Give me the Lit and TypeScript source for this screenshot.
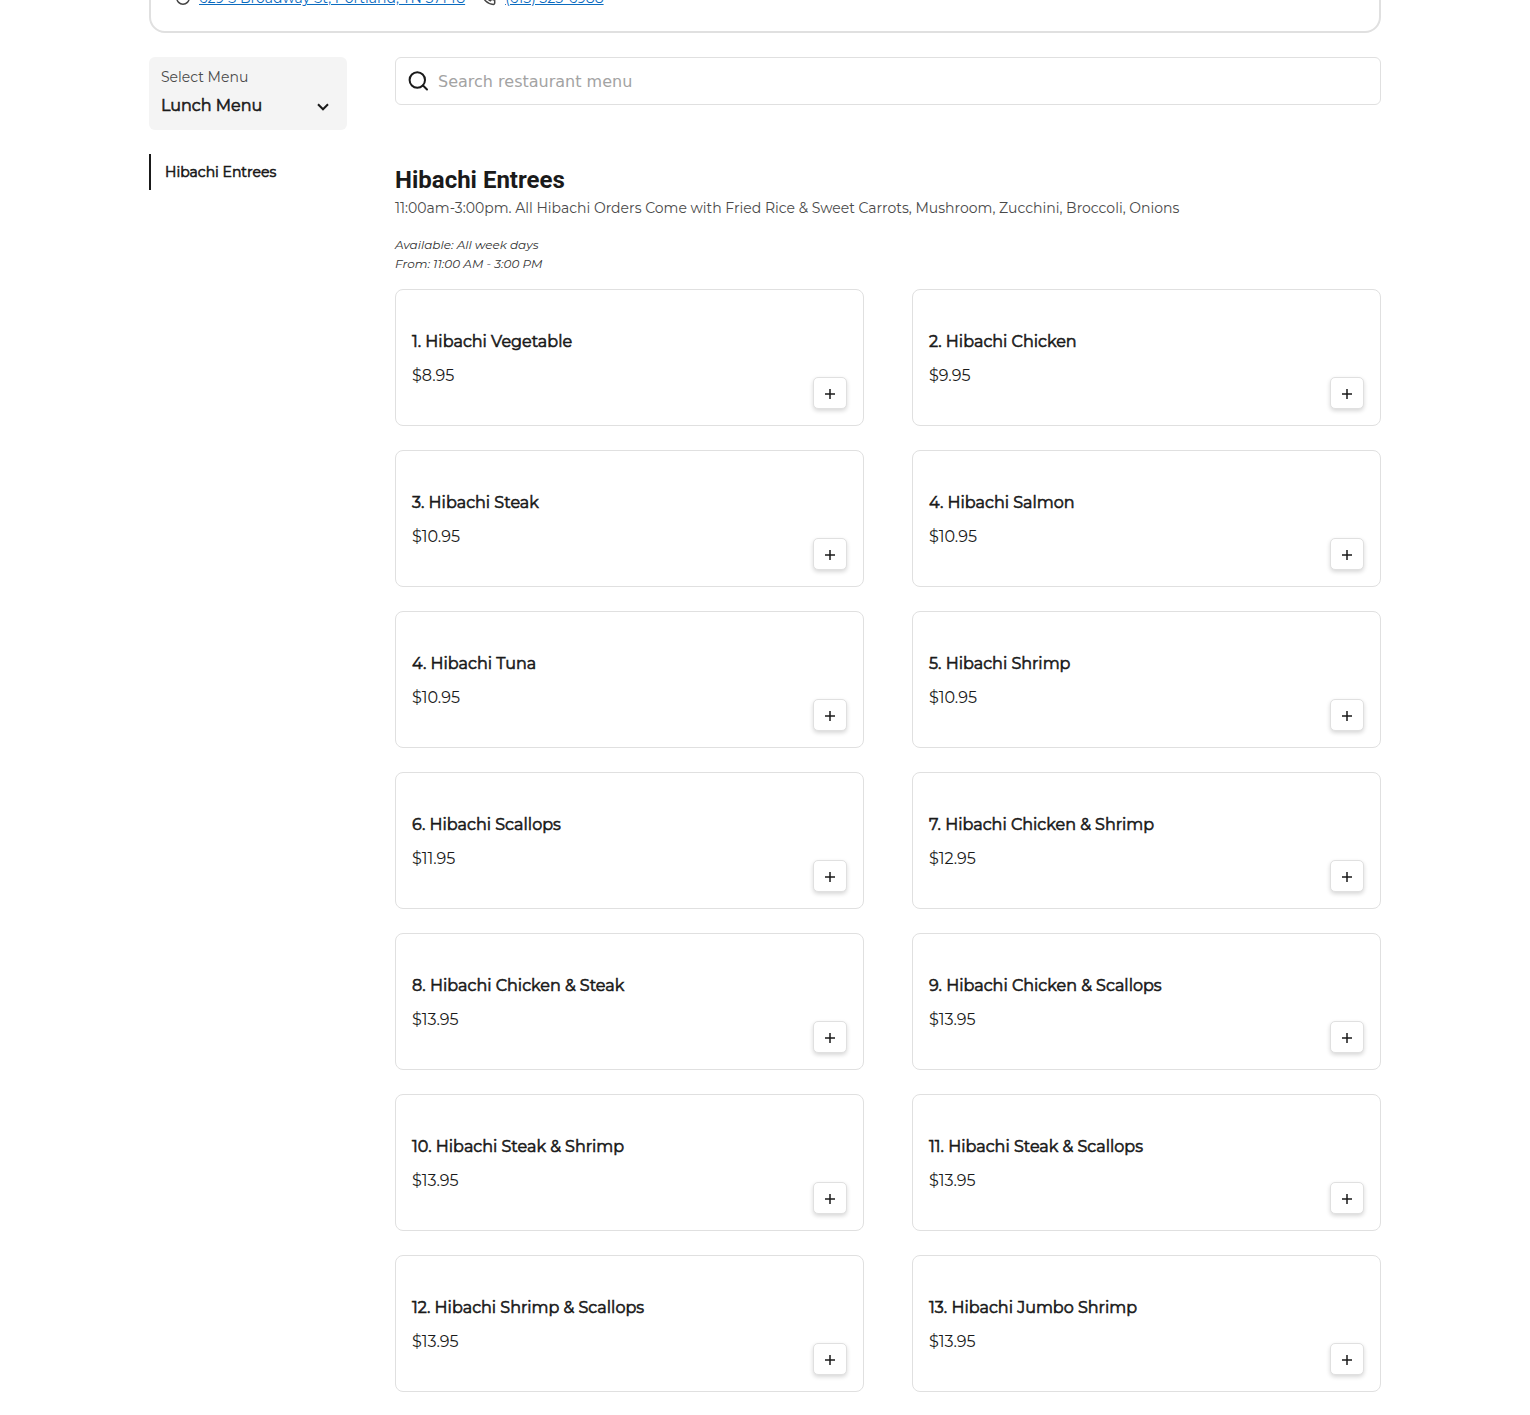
import { LitElement, html, css } from "lit";
import { customElement, property, state } from "lit/decorators.js";

interface Dish {
  name: string;
  price: string;
}

const DISHES: Dish[] = [
  { name: "1. Hibachi Vegetable", price: "$8.95" },
  { name: "2. Hibachi Chicken", price: "$9.95" },
  { name: "3. Hibachi Steak", price: "$10.95" },
  { name: "4. Hibachi Salmon", price: "$10.95" },
  { name: "4. Hibachi Tuna", price: "$10.95" },
  { name: "5. Hibachi Shrimp", price: "$10.95" },
  { name: "6. Hibachi Scallops", price: "$11.95" },
  { name: "7. Hibachi Chicken & Shrimp", price: "$12.95" },
  { name: "8. Hibachi Chicken & Steak", price: "$13.95" },
  { name: "9. Hibachi Chicken & Scallops", price: "$13.95" },
  { name: "10. Hibachi Steak & Shrimp", price: "$13.95" },
  { name: "11. Hibachi Steak & Scallops", price: "$13.95" },
  { name: "12. Hibachi Shrimp & Scallops", price: "$13.95" },
  { name: "13. Hibachi Jumbo Shrimp", price: "$13.95" },
];

/* Thickens the regular cut without changing its advance widths. */
const strong = css`
  .strong {
    font-weight: 400;
    -webkit-text-stroke: 0.6px currentColor;
  }
`;

@customElement("dish-card")
class DishCard extends LitElement {
  @property() name = "";
  @property() price = "";

  static styles = [
    strong,
    css`
      :host {
        display: block;
      }
      .card {
        display: flex;
        justify-content: space-between;
        gap: 16px;
        min-height: 103px;
        padding: 16px;
        border: 1px solid #e0e0e0;
        border-radius: 8px;
        background: #fff;
      }
      .text {
        display: flex;
        flex-direction: column;
        justify-content: center;
        gap: 10px;
        padding-top: 2px;
      }
      .name,
      .price {
        margin: 0;
        font-size: 16px;
        line-height: 24px;
      }
      .add {
        display: flex;
        flex: none;
        align-items: center;
        justify-content: center;
        align-self: flex-end;
        box-sizing: border-box;
        width: 34px;
        height: 32px;
        padding: 2px 0 0;
        border: 1px solid #e0e0e0;
        border-radius: 5px;
        background: #fff;
        color: #1a1a1a;
        box-shadow: 0 2px 4px rgba(0, 0, 0, 0.16);
        cursor: pointer;
      }
    `,
  ];

  render() {
    return html`
      <article class="card">
        <div class="text">
          <h3 class="name strong">${this.name}</h3>
          <p class="price">${this.price}</p>
        </div>
        <button class="add" type="button" aria-label="Add ${this.name}">
          <svg width="10" height="10" viewBox="0 0 10 10" fill="none" stroke="currentColor" stroke-width="1.5" aria-hidden="true">
            <path d="M5 0v10M0 5h10" />
          </svg>
        </button>
      </article>
    `;
  }
}

@customElement("app-root")
class AppRoot extends LitElement {
  @state() private query = "";

  static styles = [
    strong,
    css`
      :host {
        display: block;
        overflow: hidden;
        background: #fff;
        color: #1a1a1a;
        font-family: Montserrat, Inter, sans-serif;
        font-size: 14px;
        line-height: 20px;
      }
      .page {
        display: flex;
        flex-direction: column;
        gap: 24px;
        max-width: 1232px;
        margin: 0 auto;
        padding-bottom: 24px;
      }
      /* The contact card sits partly above the fold. */
      .contact {
        display: flex;
        gap: 16px;
        margin-top: -38px;
        padding: 24px 24px 23px;
        border: 2px solid #e0e0e0;
        border-radius: 16px;
      }
      .entry {
        display: flex;
        align-items: center;
        gap: 8px;
        font-style: normal;
      }
      .link {
        color: #0b6bbf;
        text-decoration: underline;
      }
      .columns {
        display: grid;
        grid-template-columns: 198px minmax(0, 1fr);
        gap: 48px;
      }
      .side {
        display: flex;
        flex-direction: column;
        gap: 24px;
      }
      .picker {
        display: grid;
        grid-template-columns: 1fr 12px;
        align-items: center;
        padding: 10px 18px 7px 12px;
        border-radius: 6px;
        background: #f4f4f4;
      }
      .picker-label {
        grid-column: 1 / -1;
        color: #4a4a4a;
      }
      .picker-select {
        grid-area: 2 / 1 / 3 / 3;
        appearance: none;
        height: 36px;
        padding: 0;
        border: 0;
        background: none;
        color: #1a1a1a;
        font-family: inherit;
        font-size: 16px;
      }
      .chevron {
        grid-area: 2 / 2 / 3 / 3;
        margin-top: 4px;
        pointer-events: none;
      }
      .nav-link {
        display: block;
        padding: 8px 14px;
        border-left: 2px solid #1a1a1a;
        color: #1a1a1a;
        text-decoration: none;
      }
      .search {
        display: flex;
        align-items: center;
        gap: 8px;
        box-sizing: border-box;
        height: 48px;
        padding: 0 12px;
        border: 1px solid #e0e0e0;
        border-radius: 6px;
      }
      .search-input {
        flex: 1;
        min-width: 0;
        height: 40px;
        padding: 0;
        border: 0;
        outline: 0;
        background: none;
        color: #1a1a1a;
        font-family: "DejaVu Sans", sans-serif;
        font-size: 16px;
      }
      .search-input::placeholder {
        color: #a3a3a3;
        opacity: 1;
      }
      .title {
        margin: 59px 0 2px;
        font-family: Roboto, sans-serif;
        font-size: 24px;
        font-weight: 700;
        line-height: 32px;
      }
      .about {
        margin: 0 0 17px;
        color: #4a4a4a;
      }
      .hours {
        margin: 0 0 16px;
        font-size: 12px;
        font-style: italic;
        line-height: 19px;
        color: #333;
      }
      .grid {
        display: grid;
        grid-template-columns: repeat(2, minmax(0, 1fr));
        gap: 24px 48px;
      }
    `,
  ];

  render() {
    const needle = this.query.trim().toLowerCase();
    const dishes = DISHES.filter((d) => d.name.toLowerCase().includes(needle));
    return html`
      <div class="page">
        <header class="contact">
          <address class="entry">
            <svg width="16" height="16" viewBox="0 0 16 16" fill="none" stroke="#444" stroke-width="1.5" aria-hidden="true">
              <circle cx="8" cy="8" r="6.2" />
              <circle cx="8" cy="7" r="2" />
            </svg>
            <a class="link" href="#map">629 S Broadway St, Portland, TN 37148</a>
          </address>
          <div class="entry">
            <svg width="16" height="16" viewBox="0 0 16 16" fill="none" stroke="#444" stroke-width="1.5" stroke-linejoin="round" aria-hidden="true">
              <path d="M3 2h2.600l1.300 3.300-1.700 1.300a9 9 0 0 0 4.200 4.200l1.300-1.700 3 1.300v2.600a1.400 1.400 0 0 1-1.400 1.400A11 11 0 0 1 1.600 3.400 1.400 1.400 0 0 1 3 2z" />
            </svg>
            <a class="link" href="tel:+16153256988">(615) 325-6988</a>
          </div>
        </header>
        <div class="columns">
          <aside class="side">
            <div class="picker">
              <label class="picker-label" for="menu">Select Menu</label>
              <select class="picker-select strong" id="menu">
                <option>Lunch Menu</option>
              </select>
              <svg class="chevron" width="12" height="8" viewBox="0 0 12 8" fill="none" stroke="#1a1a1a" stroke-width="2" aria-hidden="true">
                <path d="M1 1.300l5 5 5-5" />
              </svg>
            </div>
            <nav>
              <a class="nav-link strong" href="#entrees">Hibachi Entrees</a>
            </nav>
          </aside>
          <main>
            <div class="search">
              <svg width="22" height="22" viewBox="0 0 22 22" fill="none" stroke="#1a1a1a" stroke-width="2" stroke-linecap="round" aria-hidden="true">
                <circle cx="9.300" cy="10" r="7.700" />
                <path d="M15 15.500l4 4" />
              </svg>
              <input
                class="search-input"
                type="text"
                aria-label="Search restaurant menu"
                placeholder="Search restaurant menu"
                .value=${this.query}
                @input=${(e: Event) => (this.query = (e.target as HTMLInputElement).value)}
              />
            </div>
            <h2 class="title" id="entrees">Hibachi Entrees</h2>
            <p class="about">
              11:00am-3:00pm. All Hibachi Orders Come with Fried Rice &amp; Sweet Carrots, Mushroom, Zucchini, Broccoli, Onions
            </p>
            <p class="hours">Available: All week days<br />From: 11:00 AM - 3:00 PM</p>
            <div class="grid">
              ${dishes.map((d) => html`<dish-card .name=${d.name} .price=${d.price}></dish-card>`)}
            </div>
          </main>
        </div>
      </div>
    `;
  }
}
